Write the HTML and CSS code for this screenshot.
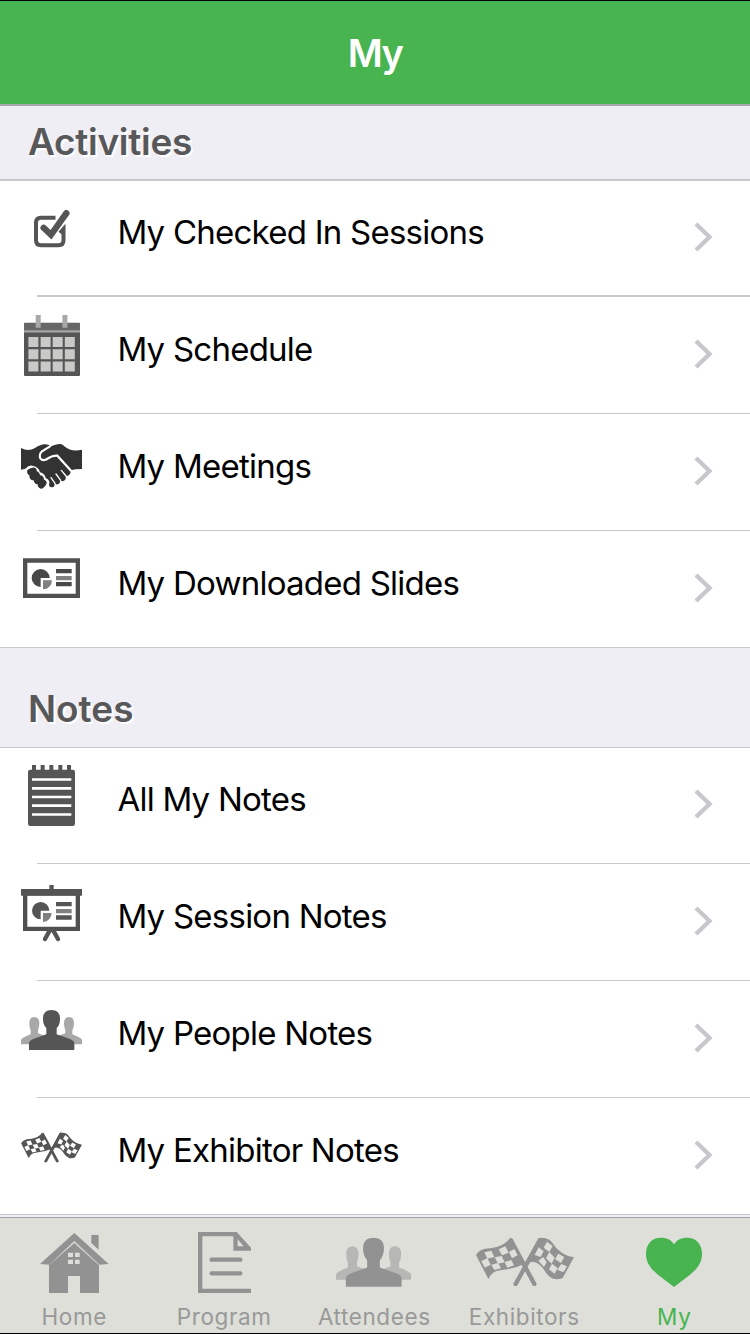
FILE: index.html
```html
<!DOCTYPE html>
<html lang="en">
<head>
<meta charset="utf-8">
<title>My</title>
<link rel="stylesheet" href="styles.css">
</head>
<body>
<svg class="defs" aria-hidden="true">
  <symbol id="people" viewBox="63 60 183 120">
    <path class="soft" d="M63 163V150Q64 144 92 133V121Q88 112 88 100Q88 81 103 81Q118 81 118 100Q118 112 114 121V130L136 138V163ZM246 163V150Q245 144 217 133V121Q222 112 222 100Q222 81 207 81Q192 81 192 100Q192 112 196 121V130L174 138V163Z"/>
    <path d="M87 180V160Q87 152 100 147L139 133V115Q129 104 129 86Q129 60 154 60Q180 60 180 86Q180 104 170 115V133L210 147Q223 152 223 160V180Z"/>
  </symbol>
  <symbol id="flags" viewBox="-72 98 294 145">
    <path d="M-72 150Q-62 131 -30 130Q12 125 31 98L75 176Q40 192 5 195Q-25 197 -35 222Z"/>
    <path d="M117 98Q145 96 157 113Q180 150 222 157L188 219Q160 232 138 203Q118 170 97 170L75 176Z"/>
    <path class="pole" d="M33 106L103 237M120 104L47 237"/>
    <path class="cell" d="M-47 142l21 -5 9 19 -21 5zM-4 133l20 -9 10 19 -20 8zM-56 168l18 -8 10 19 -18 9zM-16 157l21 -4 9 19 -20 4zM27 141l16 -9 10 19 -17 9zM-26 179l20 -5 9 16 -20 5zM14 171l20 -6 8 16 -20 7z"/>
    <path class="cell" d="M141 110l17 13 -10 18 -17 -13zM116 127l15 12 -9 17 -18 -6zM148 141l16 17 -9 18 -17 -16zM175 146l18 10 -10 18 -18 -12zM130 156l10 16 -8 14 -17 -19zM156 176l17 13 -9 17 -17 -13zM184 177l17 7 -11 18 -18 -8z"/>
  </symbol>
</svg>

<header class="navbar"><h1 class="title">My</h1></header>

<main>
  <h2 class="section activities">Activities</h2>
  <ul class="list">
    <li class="row lead">
      <svg class="icon" viewBox="0 180 118 116"><path class="box" d="M55.5 217.8H41Q36 217.8 36 222.8V240.3Q36 245.3 41 245.3H58.5Q63.5 245.3 63.5 240.3V229L60 233"/><path class="tick" d="M43.6 227.8L51 234.8L66.4 213.200"/></svg>
      <span class="label">My Checked In Sessions</span>
      <svg class="chevron" viewBox="0 0 20 32"><path d="M3 3L16.5 16L3 29"/></svg>
    </li>
    <li class="rule thick"></li>
    <li class="row">
      <svg class="icon" viewBox="0 297 118 116"><rect x="24" y="322.7" width="56" height="53.3" rx="1"/><path class="band" d="M24 323H80V330H24z"/><path class="soft" d="M24 330.3H80V332.5H24zM35.7 315h5v12.7h-5zM62.4 315h5v12.7h-5z"/><path class="day" d="M28.4 337h10v10h-10zM40.6 337h10v10h-10zM52.7 337h10v10h-10zM64.8 337h10v10h-10zM28.4 349.2h10v10h-10zM40.6 349.2h10v10h-10zM52.7 349.2h10v10h-10zM64.8 349.2h10v10h-10zM28.4 361.4h10v10h-10zM40.6 361.4h10v10h-10zM52.7 361.4h10v10h-10zM64.8 361.4h10v10h-10z"/></svg>
      <span class="label">My Schedule</span>
      <svg class="chevron" viewBox="0 0 20 32"><path d="M3 3L16.5 16L3 29"/></svg>
    </li>
    <li class="rule"></li>
    <li class="row">
      <svg class="icon shake" viewBox="0 -18 354 348">
        <path d="M63 84Q85 96 105 84Q122 73 134 73Q147 73 151 80Q170 71 181 72Q188 73 195 80Q213 96 246 89V147Q225 147 212 151Q213 164 204 167Q198 170 197 166Q200 180 190 183Q183 185 180 179Q182 190 173 193Q166 194 163 188Q166 200 157 202Q148 202 147 194Q152 180 137 174Q134 160 120 157Q115 140 100 138Q88 133 76 146L63 149Z"/>
        <path class="knuckles" d="M92 156L100 153M99 170L109 165M112 182L121 177M124 195L129 189"/>
        <path class="gap" d="M150 79L126 94Q116 104 121 115Q129 126 146 114Q158 106 172 107L213 152"/>
        <path class="gap fine" d="M184 151L198 168M168 162L182 181M153 173L165 190"/>
      </svg>
      <span class="label">My Meetings</span>
      <svg class="chevron" viewBox="0 0 20 32"><path d="M3 3L16.5 16L3 29"/></svg>
    </li>
    <li class="rule"></li>
    <li class="row">
      <svg class="icon slides" viewBox="0 333 354 348"><path class="frame" d="M75.5 421.5H233.5V527.5H75.5z"/><path d="M122 474V501A27 27 0 1 1 149 474zM168 447h47v13h-47zM168 486h47v13h-47z"/><path class="mid" d="M129 481H156A27 27 0 0 1 129 508zM168 468h47v13h-47z"/></svg>
      <span class="label">My Downloaded Slides</span>
      <svg class="chevron" viewBox="0 0 20 32"><path d="M3 3L16.5 16L3 29"/></svg>
    </li>
  </ul>

  <h2 class="section notes">Notes</h2>
  <ul class="list">
    <li class="row lead">
      <svg class="icon" viewBox="0 -9 354 348"><rect x="84" y="59" width="141" height="169" rx="7"/><path d="M96 45h12v18h-12zM122 45h12v18h-12zM148 45h12v18h-12zM175 45h12v18h-12zM201 45h12v18h-12z"/><path class="paper" d="M96 84.500h118v8h-118zM96 111h118v8h-118zM96 137h118v8h-118zM96 163h118v8h-118zM96 189.500h118v8h-118z"/></svg>
      <span class="label">All My Notes</span>
      <svg class="chevron" viewBox="0 0 20 32"><path d="M3 3L16.5 16L3 29"/></svg>
    </li>
    <li class="rule"></li>
    <li class="row">
      <svg class="icon" viewBox="0 342 354 348"><path class="frame" d="M75.500 430H233.500V536.500H75.500z"/><path d="M148 405h13v14h-13zM63 417h183v20H63zM122 482V508A26 26 0 1 1 148 482zM168 456h47v13h-47zM168 496h47v13h-47z"/><path class="mid" d="M129 489H155A27 27 0 0 1 129 516zM168 477h47v13h-47z"/><path class="legs" d="M149 542L135 567M160 542L174 567"/></svg>
      <span class="label">My Session Notes</span>
      <svg class="chevron" viewBox="0 0 20 32"><path d="M3 3L16.5 16L3 29"/></svg>
    </li>
    <li class="rule"></li>
    <li class="row">
      <svg class="icon" viewBox="0 981 118 116"><use href="#people" x="21" y="1010" width="61" height="40"/></svg>
      <span class="label">My People Notes</span>
      <svg class="chevron" viewBox="0 0 20 32"><path d="M3 3L16.5 16L3 29"/></svg>
    </li>
    <li class="rule"></li>
    <li class="row">
      <svg class="icon on-white" viewBox="0 1098 118 116"><use href="#flags" x="21" y="1132.500" width="61" height="30"/></svg>
      <span class="label">My Exhibitor Notes</span>
      <svg class="chevron" viewBox="0 0 20 32"><path d="M3 3L16.5 16L3 29"/></svg>
    </li>
  </ul>
</main>

<nav class="tabbar">
  <a class="tab">
    <svg class="tab-icon" viewBox="0 39 450 252"><path d="M223 84L326 177L298 179L223 108L148 179L120 177ZM274 90H296V134L274 114ZM223 114L297 181V264H240V213H204V264H147V181Z"/><path class="cell" d="M204 143h15v13h-15zM225 143h14v13h-14zM204 164h15v13h-15zM225 164h14v13h-14z"/></svg>
    <span class="tab-label">Home</span>
  </a>
  <a class="tab">
    <svg class="tab-icon" viewBox="450 39 450 252"><path fill-rule="evenodd" d="M594 81H710L753 128V137H700V94H607V251H753V264H594ZM713 103V124H731Z"/><path class="lines" d="M635 164H721M635 205H721"/></svg>
    <span class="tab-label">Program</span>
  </a>
  <a class="tab">
    <svg class="tab-icon" viewBox="300 1218 150 84"><use href="#people" x="336" y="1237.500" width="75" height="49.500"/></svg>
    <span class="tab-label">Attendees</span>
  </a>
  <a class="tab">
    <svg class="tab-icon" viewBox="450 1218 150 84"><use href="#flags" x="476" y="1237.700" width="98" height="48.300"/></svg>
    <span class="tab-label">Exhibitors</span>
  </a>
  <a class="tab active">
    <svg class="tab-icon" viewBox="300 39 450 252"><path d="M522 246C480 212 438 192 438 146C438 115 458 98 482 98C502 98 515 106 522 118C529 106 542 98 562 98C586 98 606 115 606 146C606 192 564 212 522 246Z"/></svg>
    <span class="tab-label">My</span>
  </a>
</nav>
</body>
</html>
```
FILE: styles.css
```css
* { box-sizing: border-box; margin: 0; padding: 0; }
body {
  width: 750px;
  height: 1334px;
  overflow: hidden;
  display: flex;
  flex-direction: column;
  background: #efeef4;
  border-top: 1px solid #000;
  border-bottom: 1px solid #000;
  font-family: Inter, "Liberation Sans", sans-serif;
}
.defs { display: none; }
main { flex: 1; }

.navbar {
  height: 105px;
  flex: none;
  background: #47b450;
  border-bottom: 2px solid #a8a8ab;
}
.title {
  text-align: center;
  font-size: 38px;
  font-weight: 600;
  letter-spacing: -1.5px;
  line-height: 105px;
  color: #fff;
}

.section {
  padding-left: 28px;
  color: #58585a;
  font-size: 37px;
  font-weight: 600;
  text-shadow: 2px 2px 0 #fff;
}
.activities {
  height: 75px;
  line-height: 71px;
  letter-spacing: -.3px;
  border-bottom: 2px solid #c8c7cc;
}
.notes {
  height: 101px;
  padding-top: 25px;
  line-height: 71px;
  border-top: 1px solid #c8c7cc;
  border-bottom: 1px solid #c8c7cc;
}

.list { list-style: none; background: #fff; }
.row {
  display: flex;
  height: 116px;
  padding-right: 37px;
}
.lead { height: 115px; }
.list:first-of-type .lead { height: 114px; }
.lead > * { margin-top: -1px; }
.rule { height: 1px; margin-left: 37px; background: #c8c7cc; }
.rule.thick { height: 2px; }
.icon { width: 118px; height: 116px; flex: none; fill: #555; color: #555; }
.label {
  flex: 1;
  height: 116px;
  margin-left: -.6px;
  line-height: 105px;
  font-size: 33px;
  letter-spacing: -.76px;
  color: #000;
  white-space: nowrap;
}
.chevron {
  width: 20px;
  height: 32px;
  align-self: flex-start;
  transform: translateY(41px);
  fill: none;
  stroke: #c7c7cc;
  stroke-width: 4.3;
}

.soft { fill: #a8a8a8; }
.box { fill: none; stroke: #555; stroke-width: 4; }
.tick { fill: none; stroke: #555; stroke-width: 6.3; stroke-linecap: round; }
.band { fill: #676767; }
.day { fill: #c9c9c7; }
.shake { fill: #333; }
.knuckles { fill: none; stroke: #333; stroke-width: 21; stroke-linecap: round; }
.gap { fill: none; stroke: #fff; stroke-width: 6.5; stroke-linecap: round; }
.gap.fine { stroke-width: 4; }
.slides { fill: #484848; }
.frame { fill: none; stroke: #505050; stroke-width: 13; }
.mid { fill: #808080; }
.paper { fill: #fff; }
.legs { fill: none; stroke: #555; stroke-width: 13; stroke-linecap: round; }
.pole { fill: none; stroke: currentColor; stroke-width: 13; stroke-linecap: round; }
.cell { fill: var(--cell, #dddfd8); }
.on-white { --cell: #fff; }

.tabbar {
  --soft: #b7b7b5;
  flex: none;
  height: 119px;
  display: grid;
  grid-template-columns: repeat(5, 150px);
  background: #dddfd8;
  border-top: 1px solid #c8c7cc;
  box-shadow: inset 0 2px #efeef4, inset 0 3px #a3a2a8;
  padding-top: 3px;
}
.soft { fill: var(--soft, #a8a8a8); }
.tab { display: flex; flex-direction: column; align-items: center; color: #929292; }
.tab-icon { width: 150px; height: 84px; flex: none; fill: currentColor; }
.tab-label {
  margin-left: -1.5px;
  font-size: 22.5px;
  line-height: 30px;
  letter-spacing: .6px;
  color: #999;
}
.lines { stroke: currentColor; stroke-width: 13; stroke-linecap: round; }
.active, .active .tab-label { color: #47b450; }
```
